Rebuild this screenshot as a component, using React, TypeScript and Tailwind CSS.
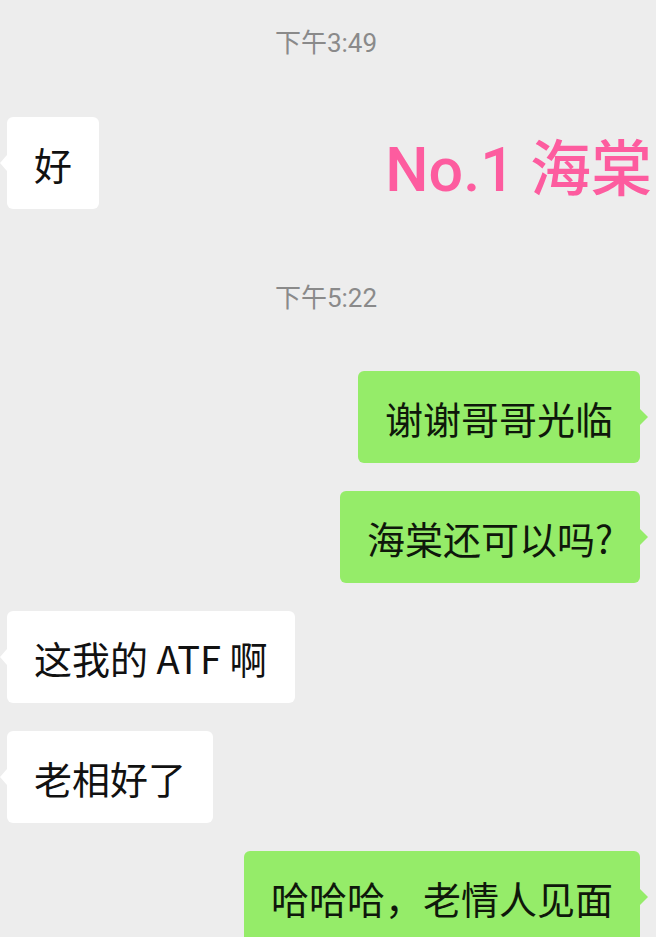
const textFont = { fontFamily: "'Noto Sans CJK SC', Roboto, sans-serif" };

function Time({ label }: { label: string }) {
  return (
    <div
      className="h-[30px] pr-[4px] text-center text-[26px] leading-[30px] text-[#8a8a8a]"
      style={{ fontFamily: "Roboto, 'Noto Sans CJK SC', sans-serif" }}
    >
      {label}
    </div>
  );
}

function Left({ text }: { text: string }) {
  return (
    <div className="relative ml-[7px] flex h-[92px] w-fit items-center rounded-[6px] bg-white px-[27px] text-[38px] text-[#111111]">
      <span className="absolute left-[-7px] top-1/2 h-0 w-0 -translate-y-1/2 border-y-[8px] border-r-[7px] border-y-transparent border-r-white" />
      {text}
    </div>
  );
}

function Right({ text }: { text: string }) {
  return (
    <div className="relative mr-[16px] ml-auto flex h-[92px] w-fit items-center rounded-[6px] bg-[#95ec69] px-[27px] text-[38px] text-[#0f180b]">
      {text}
      <span className="absolute right-[-8px] top-1/2 h-0 w-0 -translate-y-1/2 border-y-[8px] border-l-[8px] border-y-transparent border-l-[#95ec69]" />
    </div>
  );
}

export default function App() {
  return (
    <div
      className="flex h-[937px] w-full flex-col overflow-hidden bg-[#ededed] pt-[28px]"
      style={textFont}
    >
      <Time label="下午3:49" />
      <div className="mt-[59px] flex items-center">
        <Left text="好" />
        <div
          className="ml-auto mr-[4px] mt-[14px] text-[61px] font-medium leading-none text-[#fd5c9f]"
          style={{ fontFamily: "Roboto, 'Noto Sans CJK SC', sans-serif" }}
        >
          No.1 海棠
        </div>
      </div>
      <div className="mt-[74px]">
        <Time label="下午5:22" />
      </div>
      <div className="mt-[58px] flex flex-col gap-[28px]">
        <Right text="谢谢哥哥光临" />
        <Right text="海棠还可以吗?" />
        <Left text="这我的 ATF 啊" />
        <Left text="老相好了" />
        <Right text="哈哈哈，老情人见面" />
      </div>
    </div>
  );
}
